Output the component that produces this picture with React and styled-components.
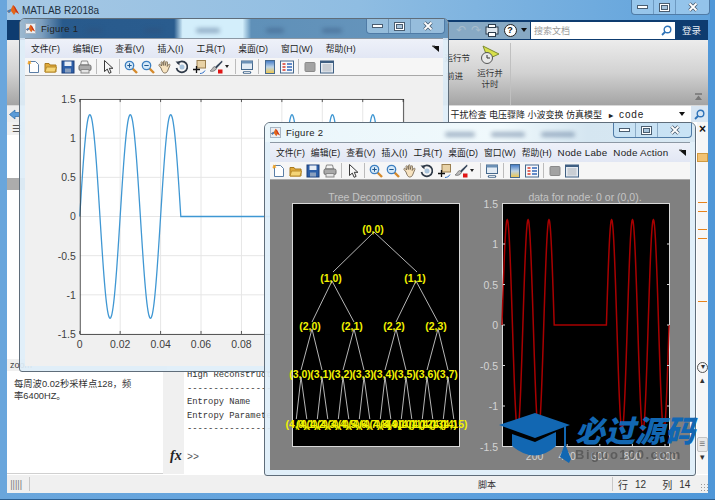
import styled, { createGlobalStyle } from 'styled-components';

const SANS = `"Liberation Sans", "Noto Sans CJK SC", sans-serif`;

const GlobalStyle = createGlobalStyle`
    html, body {
        margin: 0;
        padding: 0;
        background: #4f97d8;
        overflow: hidden;
    }
`;

const MENU = ['文件(F)', '编辑(E)', '查看(V)', '插入(I)', '工具(T)', '桌面(D)', '窗口(W)', '帮助(H)'];

function wave(x0, sx, y0, sy) {
    const pts = [];
    for (let t = 0; t <= 0.16001; t += 0.00025) {
        const v = t < 0.05 || t >= 0.1 ? 1.3 * Math.sin(2 * Math.PI * 50 * t) : 0;
        pts.push(`${(x0 + t * sx).toFixed(2)},${(y0 - v * sy).toFixed(2)}`);
    }
    return 'M' + pts.join('L');
}

function MatlabIcon() {
    return (
        <svg width="12" height="12" viewBox="0 0 12 12">
            <path d="M0 7 L4 5 L6 1 L8 3 L12 10 L9 8 L7 11 L4 7 L2 9 Z" fill="#e2661a" />
            <path d="M0 7 L4 5 L4 7 L2 9 Z" fill="#3f7fc0" />
            <path d="M6 1 L8 3 L12 10 L9 8 Z" fill="#c8301a" />
        </svg>
    );
}

function Tool({ name }) {
    const shapes = {
        new: <>
            <path d="M2.5 1.5h6l3 3v8h-9z" fill="#fff" stroke="#5b7ea6" />
            <path d="M1 0.5l1.5 1 1.5-1-.5 2 1 1-2 .2-.8 1.4-.6-1.5L0 3.2l1.4-.9z" fill="#f0a020" />
        </>,
        open: <>
            <path d="M1 3.5h4l1 1.5h6v7H1z" fill="#e0a93a" stroke="#a97a1e" />
            <path d="M2.5 7h10l-1.5 5H1z" fill="#f5d577" stroke="#b98c2c" />
        </>,
        save: <>
            <rect x="1" y="1" width="12" height="12" fill="#2d5fa8" stroke="#1c3f78" />
            <rect x="3.5" y="1.5" width="7" height="4.5" fill="#e8eef6" />
            <rect x="4" y="8.5" width="6" height="4" fill="#8a9fbd" />
        </>,
        print: <>
            <path d="M3.5 1h6l1 4h-8z" fill="#f2f2f2" stroke="#888" />
            <rect x="1" y="5" width="12" height="5.5" rx="1.5" fill="#a9a9a9" stroke="#6f6f6f" />
            <rect x="3" y="9.5" width="8" height="3.5" fill="#e4e4e4" stroke="#888" />
        </>,
        cursor: <path d="M3.5 0.5v11l2.8-2.4 1.8 4.2 2-.9-1.8-4.1h3.6z" fill="#f7f7f7" stroke="#222" strokeWidth="0.9" />,
        zoomIn: <>
            <line x1="8.5" y1="8.5" x2="13" y2="13" stroke="#d58a2b" strokeWidth="2.4" />
            <circle cx="5.5" cy="5.5" r="4.2" fill="#d5e9f8" stroke="#3c7fc0" strokeWidth="1.3" />
            <path d="M3.3 5.5h4.4M5.5 3.3v4.4" stroke="#20588f" strokeWidth="1" />
        </>,
        zoomOut: <>
            <line x1="8.5" y1="8.5" x2="13" y2="13" stroke="#d58a2b" strokeWidth="2.4" />
            <circle cx="5.5" cy="5.5" r="4.2" fill="#d5e9f8" stroke="#3c7fc0" strokeWidth="1.3" />
            <path d="M3.3 5.5h4.4" stroke="#20588f" strokeWidth="1" />
        </>,
        hand: <path d="M3 8L1 5.5c-.6-1 .8-1.6 1.4-.8L3.6 6 3 2.5c0-1 1.4-1 1.6 0L5.3 5.5 5.5 1.5c.1-1 1.5-1 1.5 0l.2 4 .9-3.3c.3-1 1.6-.6 1.4.4L9.2 6.5l1.4-2c.7-.8 1.8 0 1.3.9L10 10c-.6 2-1.5 3-3.5 3C5 13 4 11 3 8z" fill="#f7e3c0" stroke="#6a5a45" strokeWidth="0.8" />,
        rotate: <>
            <path d="M2.5 3.5A5.5 5.5 0 1 1 1.5 8" fill="none" stroke="#2f3a48" strokeWidth="1.7" />
            <path d="M0.5 1.5h4v4z" fill="#2f3a48" />
            <circle cx="7" cy="7" r="2.5" fill="#a9c4dc" />
        </>,
        data: <>
            <rect x="5" y="0.5" width="8.5" height="7.5" fill="#e8d2a6" stroke="#9a7f50" />
            <path d="M4.5 6v7M1 9.5h7" stroke="#111" strokeWidth="1.3" />
            <path d="M8 13.5c2 0 4-1 5-3" stroke="#3070c8" fill="none" />
        </>,
        brush: <>
            <path d="M13 0.5L6 7l1.5 1.500L13.500 2z" fill="#36465a" />
            <path d="M5.5 6.5c-2 .5-2 3-4.500 4.500 2.500 1 5.500 0 6.500-2.500z" fill="#b9b9b9" stroke="#555" strokeWidth="0.6" />
            <rect x="9" y="9.5" width="4.5" height="4" fill="#e01515" />
        </>,
        link: <>
            <rect x="1.5" y="1" width="11" height="8.5" fill="#e3ecf5" stroke="#46698d" />
            <rect x="1.5" y="1" width="11" height="2.5" fill="#6b90b5" />
            <path d="M4 12.5h6" stroke="#46698d" strokeWidth="2.4" strokeLinecap="round" />
            <path d="M4 12.5h6" stroke="#fff" strokeWidth="0.8" />
        </>,
        colorbar: <>
            <defs>
                <linearGradient id="cbar" x1="0" y1="0" x2="0" y2="1">
                    <stop offset="0" stopColor="#3f77c4" />
                    <stop offset="0.5" stopColor="#bcd3e6" />
                    <stop offset="1" stopColor="#f0c648" />
                </linearGradient>
            </defs>
            <rect x="2.5" y="0.5" width="9" height="13" fill="url(#cbar)" stroke="#46698d" />
        </>,
        legend: <>
            <rect x="0.5" y="1" width="13" height="12" fill="#f7f9fc" stroke="#46698d" />
            <path d="M2.5 4h3M2.5 7h3M2.5 10h3" stroke="#d83a2a" strokeWidth="1.6" />
            <path d="M7 4h5M7 7h5M7 10h5" stroke="#3568b8" strokeWidth="1.6" />
        </>,
        square: <rect x="2" y="2.5" width="10" height="9" rx="1" fill="#a3a3a3" stroke="#8a8a8a" />,
        frame: <>
            <rect x="0.5" y="1" width="13" height="12" fill="#e5ebf2" stroke="#3f5f82" />
            <rect x="0.5" y="1" width="13" height="2" fill="#3f5f82" />
            <rect x="2.5" y="4" width="9" height="7.5" fill="#c9ced4" />
        </>,
    };
    return (
        <ToolCell>
            <svg width="14" height="14" viewBox="0 0 14 14">{shapes[name]}</svg>
        </ToolCell>
    );
}

function FigureTools() {
    return (
        <Toolbar>
            <Tool name="new" />
            <Tool name="open" />
            <Tool name="save" />
            <Tool name="print" />
            <ToolSep />
            <Tool name="cursor" />
            <ToolSep />
            <Tool name="zoomIn" />
            <Tool name="zoomOut" />
            <Tool name="hand" />
            <Tool name="rotate" />
            <Tool name="data" />
            <Tool name="brush" />
            <ToolCaret />
            <ToolSep />
            <Tool name="link" />
            <ToolSep />
            <Tool name="colorbar" />
            <Tool name="legend" />
            <ToolSep />
            <Tool name="square" />
            <Tool name="frame" />
        </Toolbar>
    );
}

function WindowControls() {
    return (
        <Controls>
            <ControlCell $w={21}>
                <svg width="11" height="6" viewBox="0 0 11 6"><rect x="0.5" y="1.5" width="10" height="3" fill="#fff" stroke="#4a5d70" /></svg>
            </ControlCell>
            <ControlCell $w={21}>
                <svg width="11" height="9" viewBox="0 0 11 9"><rect x="0.5" y="0.5" width="10" height="8" fill="#fff" stroke="#4a5d70" /><rect x="2.5" y="2.5" width="6" height="4" fill="#a8c4dc" stroke="#4a5d70" /></svg>
            </ControlCell>
            <ControlCell $w={33}>
                <svg width="10" height="10" viewBox="0 0 10 10"><path d="M1.5 1.5l7 7M8.500 1.500l-7 7" stroke="#4a5d70" strokeWidth="3.4" /><path d="M1.500 1.500l7 7M8.500 1.500l-7 7" stroke="#fff" strokeWidth="1.8" /></svg>
            </ControlCell>
        </Controls>
    );
}

function Figure({ title, $x, $y, $w, $h, $glass, $gap, extra, ghosts, children }) {
    return (
        <FigureWindow $x={$x} $y={$y} $w={$w} $h={$h}>
            <FigureTitle $glass={$glass}>
                {ghosts.map((g) => <Ghost key={g[0]} $x={g[0]} $w={g[1]} />)}
                <IconTile><MatlabIcon /></IconTile>
                <FigureName>{title}</FigureName>
                <WindowControls />
            </FigureTitle>
            <FigureBody>
                <MenuBar $gap={$gap}>
                    {MENU.map((m) => <MenuItem key={m}>{m}</MenuItem>)}
                    {extra.map((m) => <MenuItem key={m} $latin>{m}</MenuItem>)}
                    <DockGlyph>
                        <svg width="9" height="8" viewBox="0 0 9 8"><path d="M1 1h7v6z" fill="#111" /><path d="M1 1h3" stroke="#555" /></svg>
                    </DockGlyph>
                </MenuBar>
                <FigureTools />
                {children}
            </FigureBody>
        </FigureWindow>
    );
}

function LinePlot() {
    const xs = [0, 0.02, 0.04, 0.06, 0.08, 0.1, 0.12, 0.14, 0.16];
    const ys = [1.5, 1, 0.5, 0, -0.5, -1, -1.5];
    const xAt = (v) => 79 + v * 2031;
    const yAt = (v) => 217 - v * 78.7;
    return (
        <PlotSvg viewBox="24 76 420 291">
            <rect x="24" y="76" width="420" height="291" fill="#f0f0f0" />
            <rect x="79" y="99" width="325" height="236" fill="#fff" />
            {xs.map((v) => <line key={v} x1={xAt(v)} x2={xAt(v)} y1="99" y2="335" stroke="#e6e6e6" />)}
            {ys.map((v) => <line key={v} x1="79" x2="404" y1={yAt(v)} y2={yAt(v)} stroke="#e6e6e6" />)}
            <path d={wave(79, 2031, 217, 78.7)} fill="none" stroke="#3f97d3" strokeWidth="1.3" />
            <rect x="79.5" y="99.5" width="325" height="236" fill="none" stroke="#333" strokeWidth="0.8" />
            {xs.map((v) => <path key={v} d={`M${xAt(v)} 99v3M${xAt(v)} 335v-3`} stroke="#333" strokeWidth="0.8" />)}
            {xs.map((v) => <AxisText key={v} x={xAt(v)} y="349" textAnchor="middle" fill="#404040">{v}</AxisText>)}
            {ys.map((v) => <AxisText key={v} x="75" y={yAt(v) + 4} textAnchor="end" fill="#404040">{v}</AxisText>)}
        </PlotSvg>
    );
}

function TreePlot() {
    const x1 = [331, 415];
    const x2 = [310, 352, 394, 436];
    const x3 = [300, 321, 342, 363, 384, 405, 426, 447];
    const x4 = Array.from({ length: 16 }, (_, i) => 296.3 + 10.5 * i);
    const edges = [];
    x1.forEach((x) => edges.push([374, 233, x + 2, 273]));
    x2.forEach((x, i) => edges.push([x1[i >> 1] + 1, 282, x + 2, 323]));
    x3.forEach((x, i) => edges.push([x2[i >> 1] + 2, 330, x + 1, 371]));
    x4.forEach((x, i) => edges.push([x3[i >> 1] + 1, 378, x, 420]));
    const labels = [[373, 234, '(0,0)']];
    x1.forEach((x, i) => labels.push([x, 283, `(1,${i})`]));
    x2.forEach((x, i) => labels.push([x, 331, `(2,${i})`]));
    x3.forEach((x, i) => labels.push([x, 379, `(3,${i})`]));
    x4.forEach((x, i) => labels.push([x, 429, `(4,${i})`]));
    return (
        <g>
            <AxisText x="375" y="202" textAnchor="middle" fill="#c4c4c4">Tree Decomposition</AxisText>
            <rect x="292.5" y="204.5" width="167" height="243" fill="#000" stroke="#d8d8d8" />
            {edges.map((e, i) => <line key={i} x1={e[0]} y1={e[1]} x2={e[2]} y2={e[3]} stroke="#c9c9c9" strokeWidth="0.9" />)}
            {labels.map((l) => <NodeText key={l[2]} x={l[0]} y={l[1]} textAnchor="middle">{l[2]}</NodeText>)}
        </g>
    );
}

function NodePlot() {
    const ys = [1.5, 1, 0.5, 0, -0.5, -1, -1.5];
    const xs = [200, 400, 600, 800, 1000];
    const yAt = (v) => 326 - v * 81;
    const xAt = (v) => 502 + v * 0.163;
    return (
        <g>
            <AxisText x="585" y="202" textAnchor="middle" fill="#c4c4c4">data for node: 0 or (0,0).</AxisText>
            <rect x="502.5" y="204.5" width="167" height="243" fill="#000" stroke="#d8d8d8" />
            <path d={wave(502, 1044, 326, 81)} fill="none" stroke="#a80000" strokeWidth="1.5" />
            {ys.map((v) => <path key={v} d={`M503 ${yAt(v)}h2M669 ${yAt(v)}h-2`} stroke="#d8d8d8" />)}
            {xs.map((v) => <path key={v} d={`M${xAt(v)} 447v-2`} stroke="#d8d8d8" />)}
            {ys.map((v) => <AxisText key={v} x="498" y={yAt(v) + 4} textAnchor="end" fill="#d4d4d4">{v}</AxisText>)}
            {xs.map((v) => <AxisText key={v} x={xAt(v)} y="461" textAnchor="middle" fill="#d4d4d4">{v}</AxisText>)}
        </g>
    );
}

function Watermark() {
    return (
        <WatermarkBox>
            <svg width="75" height="54" viewBox="0 0 75 54">
                <path d="M1 12 L37 0 L72 12 L37 25 Z" fill="#1267b2" />
                <path d="M14 21 L37 29 L58 19 L58 33 Q37 52 14 33 Z" fill="#1267b2" />
                <path d="M66 14 L66 33 L62 44 L71 50 L73 46 L68 33 L68 13 Z" fill="#1267b2" />
            </svg>
            <WatermarkText>
                <WatermarkName>必过源码</WatermarkName>
                <WatermarkSite>Biguo100.com</WatermarkSite>
            </WatermarkText>
        </WatermarkBox>
    );
}

export default function App() {
    return (
        <>
            <GlobalStyle />
            <Desktop>
                <MainWindow>
                    <MainTitle>
                        <MatlabIcon />
                        <MainName>MATLAB R2018a</MainName>
                        <WindowControls />
                    </MainTitle>
                    <TopBar>
                        <QuickAccess>
                            <QuickGlyph $faded>↶</QuickGlyph>
                            <QuickGlyph $faded>↷</QuickGlyph>
                            <svg width="14" height="13" viewBox="0 0 14 13">
                                <rect x="1" y="3" width="12" height="7" fill="#dfe7ee" stroke="#2d3d4d" />
                                <rect x="3.5" y="0.5" width="7" height="3" fill="#fff" stroke="#2d3d4d" />
                                <rect x="3.5" y="8.5" width="7" height="4" fill="#fff" stroke="#2d3d4d" />
                            </svg>
                            <HelpDot>?</HelpDot>
                            <Caret $dark />
                        </QuickAccess>
                        <SearchBox>
                            <SearchHint>搜索文档</SearchHint>
                            <Magnifier />
                        </SearchBox>
                        <Login>登录</Login>
                    </TopBar>
                    <Ribbon>
                        <RunColumn>
                            <RibbonText>运行节</RibbonText>
                            <RibbonText $inset>前进</RibbonText>
                        </RunColumn>
                        <RunTimed>
                            <svg width="20" height="20" viewBox="0 0 20 20">
                                <path d="M3 1 L19 9 L8 14 Z" fill="#d8e04a" stroke="#7c8b32" />
                                <circle cx="7" cy="13" r="5.5" fill="#e8e8e8" stroke="#555" />
                                <path d="M7 10v3h3" stroke="#333" fill="none" />
                            </svg>
                            <RibbonText>运行并</RibbonText>
                            <RibbonText>计时</RibbonText>
                        </RunTimed>
                        <RibbonSep />
                        <RibbonRest>
                            <svg width="9" height="8" viewBox="0 0 9 8"><path d="M1 1h7" stroke="#555" /><path d="M4.5 2.5L8 7H1z" fill="#777" /></svg>
                        </RibbonRest>
                    </Ribbon>
                    <AddressBar>
                        <BackCell>
                            <svg width="11" height="11" viewBox="0 0 11 11"><path d="M0.5 5.500L6 1v2.500h4.500v4H6V10z" fill="#5a9bd8" stroke="#2d6ba8" strokeWidth="0.7" /></svg>
                        </BackCell>
                        <PathText>干扰检查 电压骤降 小波变换 仿真模型 <b>▸</b> <i>code</i></PathText>
                        <Caret $dark />
                        <PathSearch><Magnifier /></PathSearch>
                    </AddressBar>
                    <Workspace>
                        <LeftPane>
                            <FolderHead>☰</FolderHead>
                            <FolderList />
                            <GreyBand />
                            <FolderList $grow />
                            <DetailHead>zoom</DetailHead>
                            <DetailText>每周波0.02秒采样点128，频率6400HZ。</DetailText>
                        </LeftPane>
                        <CenterPane>
                            <EditorArea />
                            <CommandPane>
                                <FxColumn>fx</FxColumn>
                                <CommandBody>
                                    <CommandLine>High Reconstruction</CommandLine>
                                    <CommandLine>-----------------</CommandLine>
                                    <CommandLine>Entropy Name</CommandLine>
                                    <CommandLine>Entropy Parameter</CommandLine>
                                    <CommandLine>-----------------</CommandLine>
                                    <Prompt>&gt;&gt;</Prompt>
                                    <HScroll><HThumb /></HScroll>
                                </CommandBody>
                            </CommandPane>
                        </CenterPane>
                        <Gutter>
                            <GutterClose>×</GutterClose>
                            <FoldBox />
                            <Mark $gap={40} />
                            <Mark $gap={8} />
                            <Mark $gap={17} />
                            <Mark $gap={8} />
                            <Mark $gap={62} />
                            <GutterCircle>▾</GutterCircle>
                            <GutterArrow $gap={2}>▴</GutterArrow>
                            <GutterThumb>≡</GutterThumb>
                            <GutterArrow $gap={0}>▾</GutterArrow>
                        </Gutter>
                    </Workspace>
                    <StatusBar>
                        <Grip>|||||</Grip>
                        <StatusSep />
                        <StatusText>脚本</StatusText>
                        <StatusSep />
                        <StatusCell $gap={5}>行</StatusCell>
                        <StatusCell $gap={7}>12</StatusCell>
                        <StatusCell $gap={16}>列</StatusCell>
                        <StatusCell $gap={7}>14</StatusCell>
                        <ResizeDots />
                    </StatusBar>
                </MainWindow>

                <Figure title="Figure 1" $x={19} $y={18} $w={430} $h={354} $glass="dark" $gap={13} extra={[]}
                    ghosts={[[66, 16], [124, 18], [176, 24], [246, 18], [302, 20]]}>
                    <LinePlot />
                </Figure>

                <Figure title="Figure 2" $x={264} $y={122} $w={432} $h={354} $glass="light" $gap={6} extra={['Node Labe', 'Node Action']}
                    ghosts={[[180, 30], [226, 34], [276, 34]]}>
                    <PlotSvg viewBox="270 181 420 290">
                        <rect x="270" y="181" width="420" height="290" fill="#808080" />
                        <TreePlot />
                        <NodePlot />
                    </PlotSvg>
                </Figure>

                <Watermark />
            </Desktop>
        </>
    );
}

const Desktop = styled.div`
    position: relative;
    width: 715px;
    height: 500px;
    overflow: hidden;
    font-family: ${SANS};
`;

const MainWindow = styled.div`
    box-sizing: border-box;
    width: 715px;
    height: 500px;
    padding: 0 7px 6px;
    display: flex;
    flex-direction: column;
    background: linear-gradient(90deg, #6aa6dc, #62a3de 50%, #4f97d8);
    border-bottom: 1px solid #2d5f90;
`;

const MainTitle = styled.div`
    height: 20px;
    margin: 0 -2px 0 0;
    display: flex;
    align-items: center;
    gap: 3px;
    background: linear-gradient(90deg, #a6c8e4, #8fbde2 50%, #5fa2dc);
`;

const MainName = styled.span`
    flex: 1;
    font-size: 10px;
    color: #20303f;
`;

const Controls = styled.div`
    display: flex;
    align-self: flex-start;
    height: 14px;
    border: 1px solid #4f7ba6;
    border-top: none;
    border-radius: 0 0 4px 4px;
    background: rgba(190, 222, 245, 0.55);
    z-index: 1;
`;

const ControlCell = styled.div`
    width: ${(p) => p.$w}px;
    display: flex;
    align-items: center;
    justify-content: center;
    border-left: 1px solid rgba(50, 90, 130, 0.4);
    &:first-child {
        border-left: none;
    }
`;

const TopBar = styled.div`
    height: 20px;
    display: flex;
    align-items: center;
    justify-content: flex-end;
    background: #0e3c70;
`;

const QuickAccess = styled.div`
    width: 82px;
    height: 17px;
    box-sizing: border-box;
    padding: 0 3px 0 8px;
    display: flex;
    align-items: center;
    justify-content: space-between;
    background: #87a9c4;
`;

const QuickGlyph = styled.span`
    font-size: 12px;
    color: ${(p) => (p.$faded ? '#a8bccb' : '#222')};
`;

const HelpDot = styled.span`
    width: 11px;
    height: 11px;
    border-radius: 50%;
    background: #fff;
    border: 1px solid #222;
    font-size: 9px;
    font-weight: 700;
    line-height: 11px;
    text-align: center;
    color: #111;
`;

const Caret = styled.span`
    width: 0;
    height: 0;
    border-left: 3.5px solid transparent;
    border-right: 3.5px solid transparent;
    border-top: 4px solid ${(p) => (p.$dark ? '#111' : '#555')};
`;

const SearchBox = styled.div`
    width: 144px;
    height: 17px;
    margin-left: 1px;
    box-sizing: border-box;
    padding: 0 3px;
    display: flex;
    align-items: center;
    justify-content: space-between;
    background: #fff;
`;

const SearchHint = styled.span`
    font-size: 9px;
    color: #999;
`;

const MagnifierIcon = styled.svg`
    width: 11px;
    height: 11px;
`;

function Magnifier() {
    return (
        <MagnifierIcon viewBox="0 0 11 11">
            <circle cx="6.5" cy="4.5" r="3.3" fill="none" stroke="#2f73b8" strokeWidth="1.4" />
            <line x1="4" y1="7" x2="1" y2="10" stroke="#2f73b8" strokeWidth="1.8" />
        </MagnifierIcon>
    );
}

const Login = styled.span`
    width: 33px;
    text-align: center;
    font-size: 9.5px;
    color: #e8eef5;
`;

const Ribbon = styled.div`
    height: 65px;
    display: flex;
    justify-content: flex-end;
    background: linear-gradient(180deg, #ececec, #d2d2d2 50%, #a4a4a4);
`;

const RunColumn = styled.div`
    width: 40px;
    padding-top: 13px;
    display: flex;
    flex-direction: column;
    align-items: flex-end;
    gap: 7px;
`;

const RunTimed = styled.div`
    width: 40px;
    padding-top: 5px;
    display: flex;
    flex-direction: column;
    align-items: center;
    svg {
        margin-bottom: 3px;
    }
`;

const RibbonText = styled.span`
    font-size: 8.5px;
    line-height: 11px;
    color: #333;
    margin-right: ${(p) => (p.$inset ? 7 : 0)}px;
`;

const RibbonSep = styled.div`
    width: 1px;
    margin-top: 3px;
    background: #c0c0c0;
`;

const RibbonRest = styled.div`
    width: 197px;
    box-sizing: border-box;
    padding: 0 5px 4px 0;
    display: flex;
    align-items: flex-end;
    justify-content: flex-end;
`;

const AddressBar = styled.div`
    height: 17px;
    display: flex;
    align-items: center;
    background: #fff;
    border-top: 1px solid #d8d8d8;
    box-sizing: border-box;
`;

const BackCell = styled.div`
    width: 14px;
    height: 100%;
    display: flex;
    align-items: center;
    justify-content: center;
    background: #ececec;
`;

const PathText = styled.span`
    flex: 1;
    font-size: 9px;
    color: #222;
    text-align: right;
    padding-right: 35px;
    white-space: nowrap;
    b {
        font-size: 8px;
        margin: 0 4px;
    }
    i {
        font-style: normal;
        font-size: 10px;
        letter-spacing: 0.8px;
    }
`;

const PathSearch = styled.div`
    width: 17px;
    height: 100%;
    margin-left: 6px;
    display: flex;
    align-items: center;
    justify-content: center;
    background: #d8e6f3;
`;

const Workspace = styled.div`
    flex: 1;
    min-height: 0;
    display: flex;
    background: #f0f0f0;
`;

const LeftPane = styled.div`
    width: 156px;
    display: flex;
    flex-direction: column;
    background: #fff;
    border-bottom: 1px solid #d0d0d0;
    box-sizing: border-box;
`;

const FolderHead = styled.div`
    height: 13px;
    padding-left: 5px;
    font-size: 10px;
    line-height: 13px;
    color: #555;
    background: #f0f0f0;
`;

const FolderList = styled.div`
    flex: ${(p) => (p.$grow ? 1 : '0 0 43px')};
    background: #fff;
`;

const GreyBand = styled.div`
    height: 12px;
    background: #acacac;
`;

const DetailHead = styled.div`
    height: 12px;
    padding-left: 3px;
    font-size: 9px;
    line-height: 12px;
    color: #444;
    background: #f0f0f0;
`;

const DetailText = styled.div`
    height: 102px;
    box-sizing: border-box;
    padding: 7px 26px 0 7px;
    font-size: 9.3px;
    line-height: 12px;
    color: #333;
`;

const CenterPane = styled.div`
    flex: 1;
    margin-left: 4px;
    display: flex;
    flex-direction: column;
`;

const EditorArea = styled.div`
    flex: 1;
    background: #fff;
`;

const CommandPane = styled.div`
    height: 103px;
    display: flex;
    background: #f0f0f0;
`;

const FxColumn = styled.div`
    width: 17px;
    padding: 0 0 10px 3px;
    box-sizing: border-box;
    display: flex;
    align-items: flex-end;
    font-family: "Liberation Serif", serif;
    font-style: italic;
    font-weight: 700;
    font-size: 14px;
    color: #222;
`;

const CommandBody = styled.div`
    flex: 1;
    display: flex;
    flex-direction: column;
    padding-left: 3px;
    background: #fff;
`;

const CommandLine = styled.div`
    height: 13.5px;
    font-family: "Liberation Mono", monospace;
    font-size: 8.8px;
    line-height: 13.5px;
    color: #333;
    white-space: nowrap;
    position: relative;
    top: -2px;
`;

const Prompt = styled(CommandLine)`
    flex: 1;
    display: flex;
    align-items: flex-end;
    padding-bottom: 10px;
    box-sizing: border-box;
    min-height: 36px;
    top: 0;
    font-size: 10px;
    color: #555;
`;

const HScroll = styled.div`
    height: 12px;
    margin-left: -3px;
    padding-left: 14px;
    background: #f0f0f0;
`;

const HThumb = styled.div`
    height: 10px;
    border: 1px solid #bdbdbd;
    border-radius: 2px;
    background: #e8e8e8;
`;

const Gutter = styled.div`
    width: 11px;
    display: flex;
    flex-direction: column;
    align-items: center;
    background: #f6f6f6;
`;

const GutterClose = styled.div`
    height: 14px;
    font-size: 12px;
    font-weight: 700;
    line-height: 14px;
    color: #111;
`;

const FoldBox = styled.div`
    width: 9px;
    height: 7px;
    margin-top: 17px;
    background: #f2c272;
    border: 1px solid #d09a40;
`;

const Mark = styled.div`
    width: 9px;
    height: 1px;
    flex: none;
    margin-top: ${(p) => p.$gap}px;
    background: #e8831a;
`;

const GutterCircle = styled.div`
    width: 9px;
    height: 9px;
    flex: none;
    margin-top: 60px;
    border: 1px solid #555;
    border-radius: 50%;
    font-size: 8px;
    line-height: 8px;
    text-align: center;
    color: #333;
`;

const GutterArrow = styled.div`
    height: 10px;
    flex: none;
    margin-top: ${(p) => p.$gap}px;
    font-size: 9px;
    line-height: 10px;
    color: #333;
`;

const GutterThumb = styled.div`
    width: 9px;
    height: 13px;
    flex: none;
    margin-top: 52px;
    border: 1px solid #c4c4c4;
    border-radius: 2px;
    background: #e8e8e8;
    font-size: 10px;
    line-height: 12px;
    text-align: center;
    color: #777;
`;

const StatusBar = styled.div`
    height: 19px;
    display: flex;
    align-items: center;
    background: #f0f0f0;
    border-top: 1px solid #fff;
    box-sizing: border-box;
`;

const Grip = styled.span`
    width: 22px;
    padding-left: 3px;
    box-sizing: border-box;
    font-size: 11px;
    letter-spacing: -0.5px;
    color: #888;
`;

const StatusSep = styled.div`
    width: 1px;
    height: 14px;
    background: #c8c8c8;
`;

const StatusText = styled.span`
    width: 582px;
    box-sizing: border-box;
    padding-right: 116px;
    text-align: right;
    font-size: 9px;
    color: #333;
`;

const StatusCell = styled.span`
    margin-left: ${(p) => p.$gap}px;
    font-size: 10px;
    color: #333;
`;

const ResizeDots = styled.div`
    width: 8px;
    height: 8px;
    margin: 6px 0 0 auto;
    background-image: radial-gradient(#9a9a9a 1px, transparent 1px);
    background-size: 3px 3px;
`;

const FigureWindow = styled.div`
    position: absolute;
    left: ${(p) => p.$x}px;
    top: ${(p) => p.$y}px;
    width: ${(p) => p.$w}px;
    height: ${(p) => p.$h}px;
    box-sizing: border-box;
    padding: 0 5px 5px;
    display: flex;
    flex-direction: column;
    border: 1px solid #5f6d7a;
    border-radius: 6px 6px 3px 3px;
    background: rgba(222, 238, 248, 0.92);
`;

const FigureTitle = styled.div`
    position: relative;
    height: 19px;
    flex: none;
    margin: 0 -5px;
    padding-left: 5px;
    display: flex;
    align-items: center;
    gap: 5px;
    border-radius: 5px 5px 0 0;
    background: ${(p) => (p.$glass === 'dark'
        ? 'linear-gradient(90deg, #9cb9d0 0, #7ea0bf 5%, #285a8c 10%, #2a5c8e 36%, #d3eefb 38%, #d3eefb 52%, #5f90b8 54%, #6896bd 100%)'
        : 'linear-gradient(90deg, #eaf6fb 0, #f0f9fc 55%, #d5e6f1 75%, #d8e8f3 100%)')};
    & > div:last-child {
        margin-left: auto;
        margin-right: 3px;
    }
`;

const Ghost = styled.div`
    position: absolute;
    left: ${(p) => p.$x}px;
    top: 9px;
    width: ${(p) => p.$w}px;
    height: 5px;
    border-radius: 3px;
    background: rgba(50, 80, 120, 0.4);
    filter: blur(2px);
`;

const IconTile = styled.div`
    width: 11px;
    height: 11px;
    display: flex;
    align-items: center;
    justify-content: center;
    background: #e9eef3;
    border: 1px solid #a8b6c4;
    box-sizing: border-box;
    svg {
        width: 9px;
        height: 9px;
    }
`;

const FigureName = styled.span`
    font-size: 9.5px;
    letter-spacing: 0.3px;
    color: #222;
`;

const FigureBody = styled.div`
    flex: 1;
    min-height: 0;
    display: flex;
    flex-direction: column;
    border-top: 1px solid #8c98a4;
    background: #f0f0f0;
`;

const MenuBar = styled.div`
    height: 19px;
    flex: none;
    padding: 0 3px 0 6px;
    display: flex;
    align-items: center;
    gap: ${(p) => p.$gap}px;
    background: linear-gradient(180deg, #eef1f9, #e2e7f4);
`;

const MenuItem = styled.span`
    font-size: ${(p) => (p.$latin ? 9.8 : 8.8)}px;
    letter-spacing: ${(p) => (p.$latin ? 0.2 : 0)}px;
    color: #1c1c1c;
    white-space: nowrap;
`;

const DockGlyph = styled.span`
    margin-left: auto;
    display: flex;
`;

const Toolbar = styled.div`
    height: 18px;
    flex: none;
    display: flex;
    align-items: center;
    background: #f6f6f6;
    border-bottom: 1px solid #a8a8a8;
    box-sizing: border-box;
`;

const ToolCell = styled.div`
    width: 17px;
    display: flex;
    justify-content: center;
`;

const ToolSep = styled.div`
    width: 1px;
    height: 15px;
    margin: 0 2.5px;
    background: #bcbcbc;
`;

const ToolCaret = styled(Caret)`
    margin: 0 3px 0 1px;
    border-top-color: #222;
    border-left-width: 2.5px;
    border-right-width: 2.5px;
    border-top-width: 3px;
`;

const PlotSvg = styled.svg`
    flex: 1;
    min-height: 0;
    width: 100%;
    display: block;
`;

const AxisText = styled.text`
    font-family: "Liberation Sans", sans-serif;
    font-size: 10.5px;
`;

const NodeText = styled.text`
    font-family: "Liberation Sans", sans-serif;
    font-size: 10.5px;
    font-weight: 700;
    fill: #f2f200;
`;

const WatermarkBox = styled.div`
    position: absolute;
    left: 498px;
    top: 413px;
    display: flex;
    gap: 2px;
`;

const WatermarkText = styled.div`
    display: flex;
    flex-direction: column;
`;

const WatermarkName = styled.span`
    font-family: "Noto Sans CJK SC", sans-serif;
    font-size: 30px;
    font-weight: 900;
    font-style: italic;
    line-height: 32px;
    color: #1267b2;
    white-space: nowrap;
`;

const WatermarkSite = styled.span`
    margin-top: 2px;
    font-size: 13px;
    font-weight: 700;
    letter-spacing: 1.5px;
    color: rgba(80, 80, 80, 0.75);
    filter: blur(0.6px);
`;
